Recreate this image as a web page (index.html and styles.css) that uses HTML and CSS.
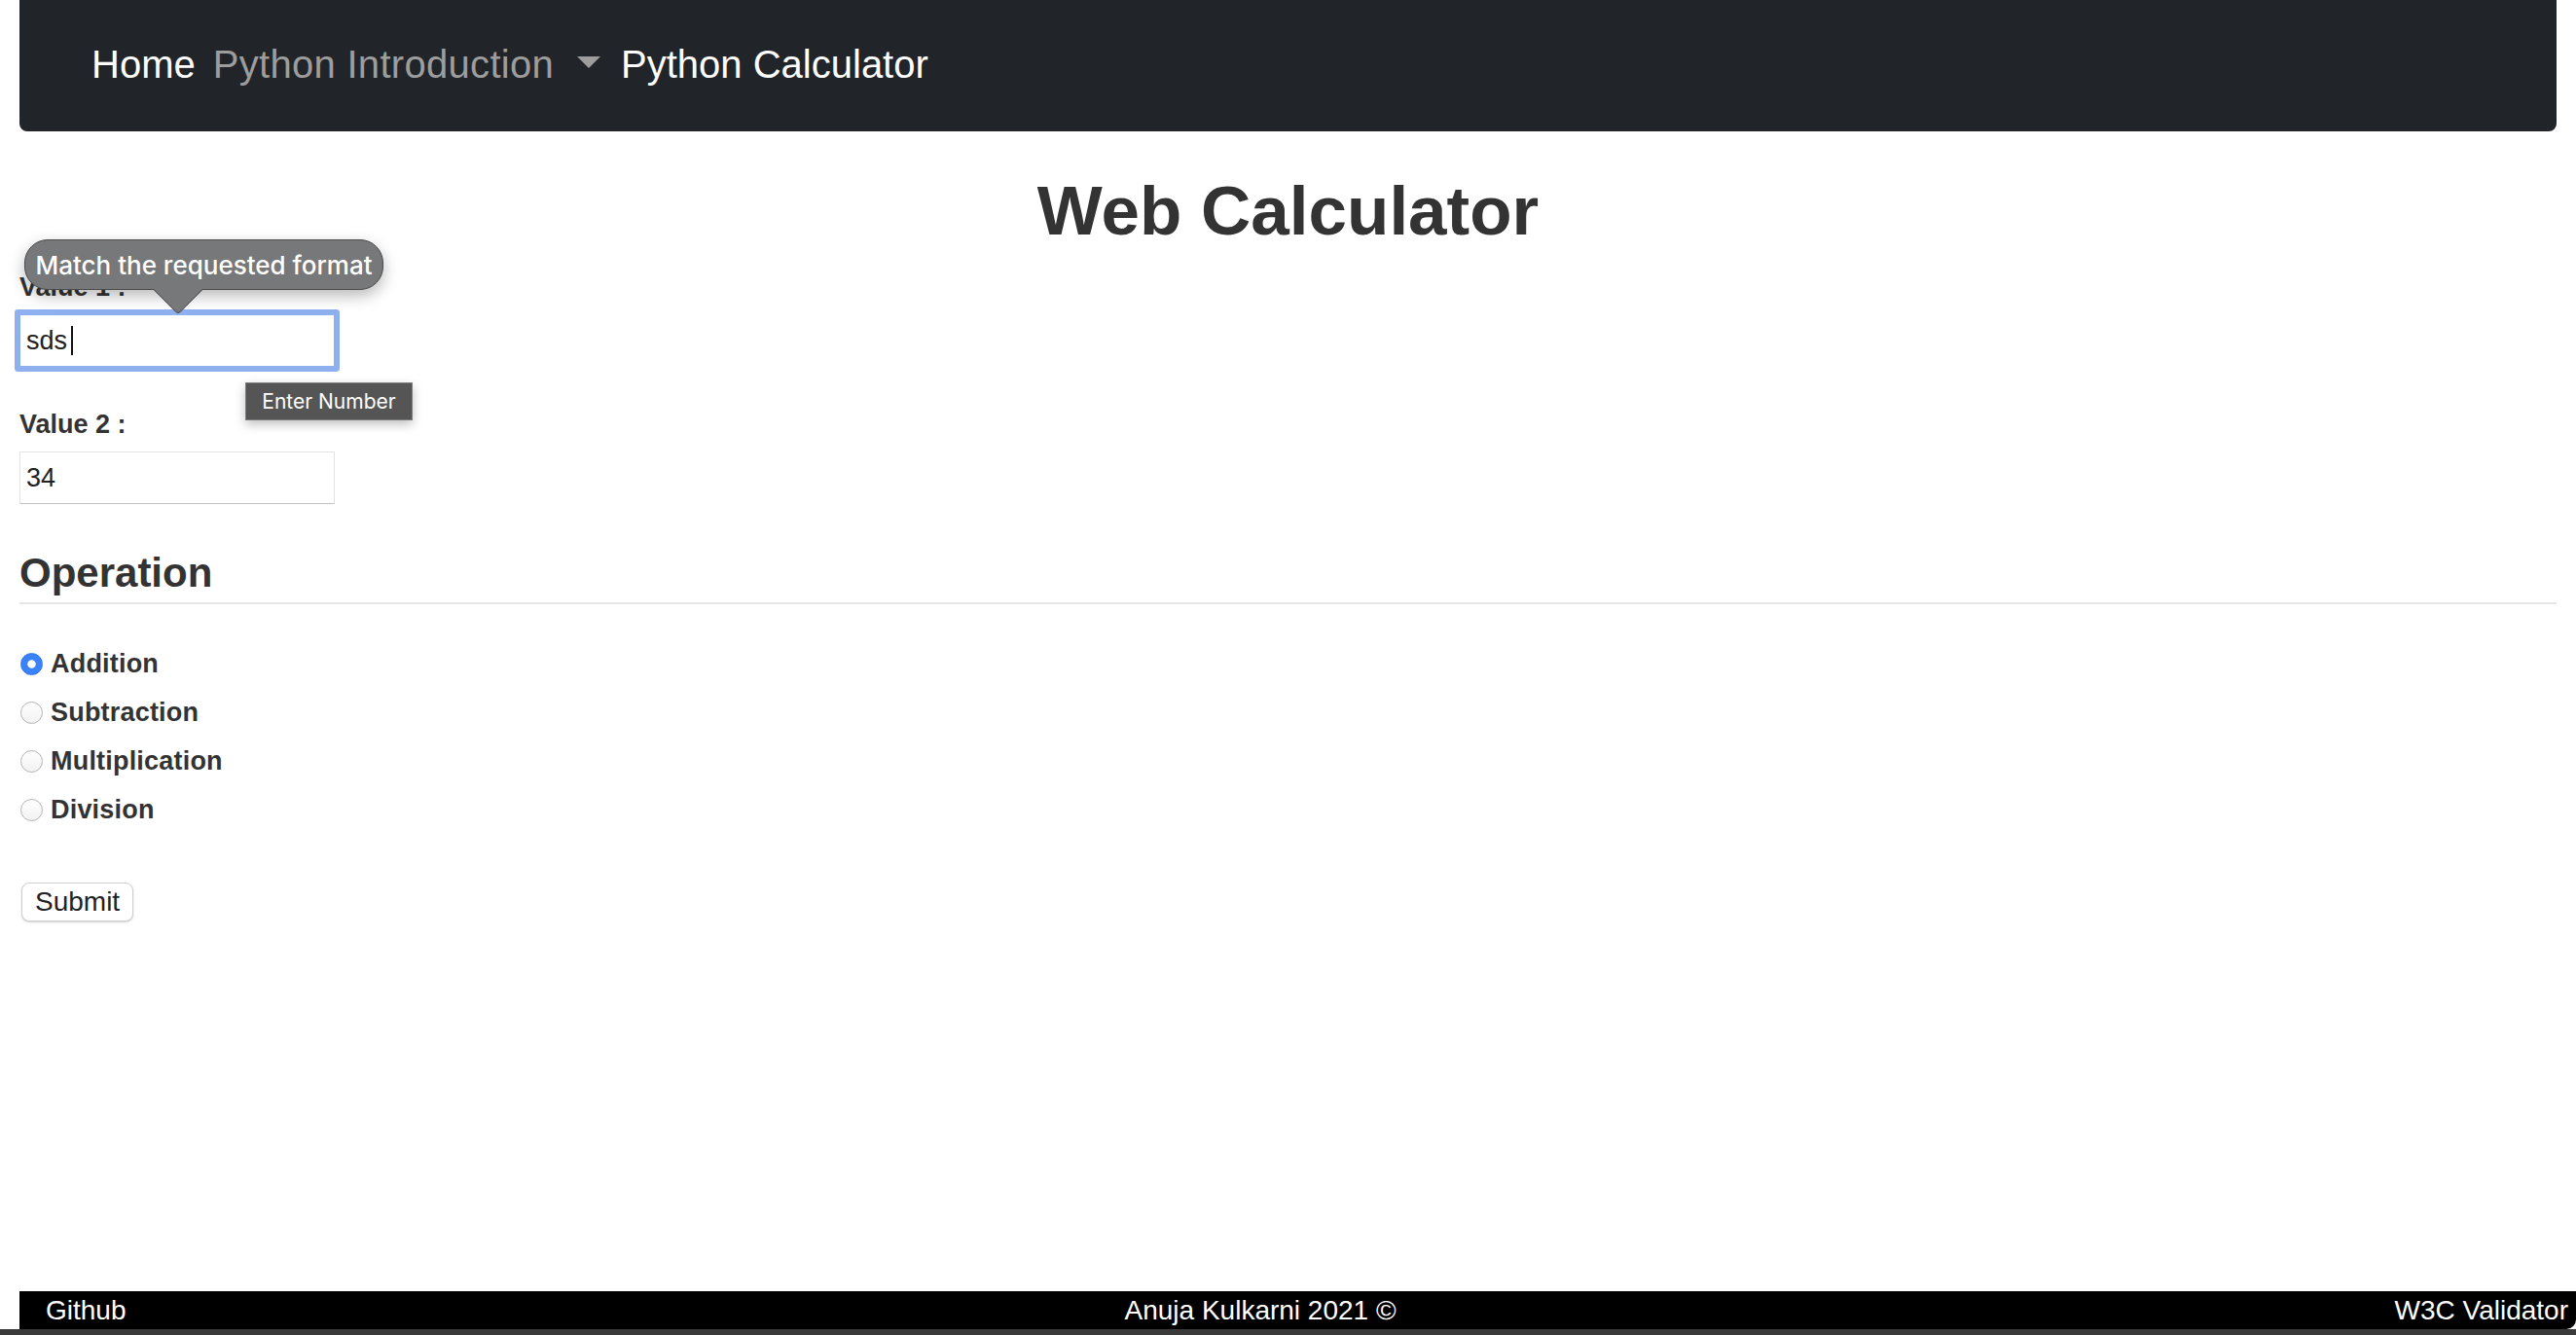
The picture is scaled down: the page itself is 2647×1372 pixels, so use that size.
FILE: index.html
```html
<!DOCTYPE html>
<html lang="en">
<head>
<meta charset="utf-8">
<title>Web Calculator</title>
<link rel="stylesheet" href="styles.css">
</head>
<body>
<div class="page">
  <nav class="navbar">
    <a class="nav-link nav-active" href="#">Home</a>
    <a class="nav-link nav-muted" href="#">Python Introduction</a>
    <span class="nav-caret"></span>
    <a class="nav-link nav-active nav-last" href="#">Python Calculator</a>
  </nav>

  <main class="content">
    <h1 class="title">Web Calculator</h1>
    <form class="calc-form">
      <div class="form-group">
        <label class="field-label" for="v1">Value 1 :</label>
        <div class="field-wrap">
          <input class="field field-focus" id="v1" type="text" value="sds">
          <span class="text-caret"></span>
        </div>
      </div>
      <div class="form-group group-2">
        <label class="field-label" for="v2">Value 2 :</label>
        <input class="field" id="v2" type="text" value="34">
      </div>

      <fieldset class="ops">
        <legend class="ops-legend">Operation</legend>
        <label class="radio-row"><input class="radio" type="radio" name="op" checked><span>Addition</span></label>
        <label class="radio-row"><input class="radio" type="radio" name="op"><span>Subtraction</span></label>
        <label class="radio-row"><input class="radio" type="radio" name="op"><span>Multiplication</span></label>
        <label class="radio-row"><input class="radio" type="radio" name="op"><span>Division</span></label>
      </fieldset>

      <button class="submit" type="button">Submit</button>

      <div class="bubble"><span class="bubble-arrow"></span><span class="bubble-text">Match the requested format</span></div>
      <div class="hint">Enter Number</div>
    </form>
  </main>
</div>
<footer class="footer">
  <span>Github</span>
  <span>Anuja Kulkarni 2021 ©</span>
  <span>W3C Validator</span>
</footer>
<div class="desktop"></div>
</body>
</html>
```
FILE: styles.css
```css
* { box-sizing: border-box; }

html, body { height: 100%; }

body {
  margin: 0;
  font-family: "Liberation Sans", Arial, sans-serif;
  color: #333;
  background: #fff;
  display: flex;
  flex-direction: column;
  min-height: 100vh;
  overflow: hidden;
}

.page {
  padding: 0 20px;
  flex: 1 0 auto;
}

/* navbar */
.navbar {
  height: 135px;
  background: #212529;
  border-radius: 0 0 8px 8px;
  display: flex;
  align-items: flex-start;
  padding: 43px 0 0 74px;
}

.nav-link {
  font-size: 40px;
  line-height: 46px;
  text-decoration: none;
  white-space: nowrap;
}

.nav-active { color: #fff; }
.nav-muted { color: #9d9d9d; margin-left: 18px; letter-spacing: 0.3px; }

.nav-caret {
  width: 0;
  height: 0;
  margin: 15px 0 0 24px;
  border-left: 12px solid transparent;
  border-right: 12px solid transparent;
  border-top: 12px solid #9d9d9d;
}

.nav-last { margin-left: 21px; }

/* heading */
.title {
  margin: 43px 0 20px;
  text-align: center;
  font-size: 71px;
  line-height: 78px;
  font-weight: 700;
  color: #333;
}

/* form */
.calc-form {
  position: relative;
}

.form-group { margin: 0; }
.group-2 { margin-top: 40px; }

.field-label {
  display: block;
  font-size: 27px;
  line-height: 38px;
  font-weight: 700;
  color: #333;
  margin-bottom: 9px;
}

.field-wrap {
  position: relative;
  width: 324px;
}

.field {
  display: block;
  width: 324px;
  height: 54px;
  margin: 0;
  padding: 0 6px;
  font-family: "Liberation Sans", Arial, sans-serif;
  font-size: 27px;
  color: #222;
  background: #fff;
  border: 1px solid #e3e3e3;
  border-bottom-color: #c2c2c2;
  border-radius: 0;
  outline: none;
}

.field-focus {
  border-color: #8fb0ee;
  border-radius: 1px;
  box-shadow: 0 0 0 5px #8fb0ee;
}

.text-caret {
  position: absolute;
  left: 53px;
  top: 12px;
  width: 2px;
  height: 30px;
  background: #111;
}

/* operations */
.ops {
  margin: 41px 0 0;
  padding: 0;
  border: 0;
  min-width: 0;
}

.ops-legend {
  display: block;
  width: 100%;
  padding: 0;
  margin: 0 0 36px;
  font-size: 42px;
  line-height: 60px;
  font-weight: 700;
  color: #333;
  border-bottom: 2px solid #e5e5e5;
}

.radio-row {
  display: flex;
  align-items: center;
  height: 50px;
  font-size: 27px;
  font-weight: 700;
  color: #333;
  letter-spacing: 0.2px;
}

.radio {
  appearance: none;
  -webkit-appearance: none;
  width: 23px;
  height: 23px;
  margin: 0 8px 0 1px;
  border-radius: 50%;
  border: 1px solid #b4b4b4;
  background: linear-gradient(#fff, #f2f2f2);
}

.radio:checked {
  border-color: #2f76ef;
  background: radial-gradient(circle, #fff 0 3.8px, #3a82f7 4.6px);
}

.submit {
  display: block;
  margin-top: 50px;
  margin-left: 2px;
  height: 40px;
  padding: 0 13px;
  font-family: "Liberation Sans", Arial, sans-serif;
  font-size: 28px;
  color: #222;
  background: #fff;
  border: 1px solid #d0d0d0;
  border-radius: 8px;
  box-shadow: 0 1px 2px rgba(0, 0, 0, 0.18);
}

/* validation bubble */
.bubble {
  position: absolute;
  left: 5px;
  top: -30px;
  width: 369px;
  height: 52px;
  display: flex;
  align-items: center;
  justify-content: center;
  font-family: Inter, "Liberation Sans", sans-serif;
  font-weight: 500;
  font-size: 26px;
  color: #fff;
  background: #777879;
  border: 1px solid #4a4a4a;
  border-radius: 24px;
  box-shadow: 0 6px 16px rgba(0, 0, 0, 0.28);
}

.bubble-text {
  position: relative;
}

.bubble-arrow {
  position: absolute;
  left: 139px;
  bottom: -19px;
  width: 36px;
  height: 36px;
  background: #777879;
  border-right: 1px solid #4a4a4a;
  border-bottom: 1px solid #4a4a4a;
  border-bottom-right-radius: 4px;
  transform: rotate(45deg);
}

.hint {
  position: absolute;
  left: 232px;
  top: 117px;
  width: 172px;
  height: 39px;
  display: flex;
  align-items: center;
  justify-content: center;
  font-family: Inter, "Liberation Sans", sans-serif;
  font-size: 21px;
  color: #fff;
  background: #555;
  border: 1px solid #7c7c7c;
  box-shadow: 0 4px 10px rgba(0, 0, 0, 0.25);
}

/* footer */
.footer {
  flex: 0 0 39px;
  height: 39px;
  margin-left: 20px;
  padding: 0 8px 0 27px;
  display: flex;
  align-items: center;
  justify-content: space-between;
  background: #000;
  color: #fff;
  font-size: 28px;
  border-bottom-right-radius: 10px;
}

.desktop {
  flex: 0 0 6px;
  height: 6px;
  background: #3a3a3a;
}
```
